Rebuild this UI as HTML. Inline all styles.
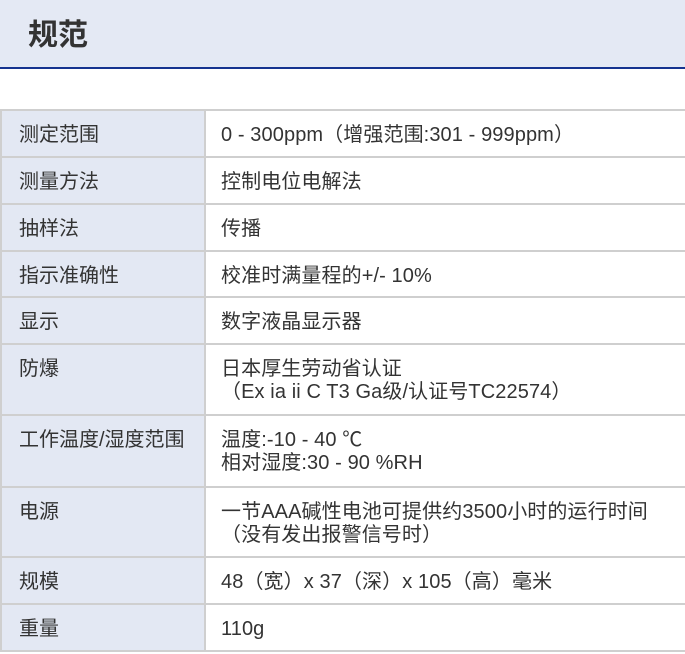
<!DOCTYPE html>
<html><head><meta charset="utf-8"><style>
html,body{margin:0;padding:0;background:#fff;width:685px;height:654px;overflow:hidden}
body{font-family:"Liberation Sans","Noto Sans CJK SC",sans-serif;color:#333}
.hd{position:absolute;left:0;top:0;width:685px;height:67px;background:#e4e9f4;border-bottom:2px solid #15338f}
.hd span{position:absolute;left:28px;top:16px;font-size:30px;font-weight:bold;color:#333;line-height:40px}
table{position:absolute;left:0;top:109px;width:687px;border-collapse:collapse;font-size:20px;line-height:23px}
td{border:2px solid #cfcfcf;vertical-align:top;padding:13px 0 0 0;box-sizing:border-box}
td.l{width:204px;background:#e3e8f3;padding-left:17px}
td.r{padding-left:15px;background:#fff;letter-spacing:0.1px}
</style></head><body>
<div class="hd"><span>规范</span></div>
<table>
<tr style="height:47px"><td class="l">测定范围</td><td class="r">0 - 300ppm（增强范围:301 - 999ppm）</td></tr>
<tr style="height:47px"><td class="l">测量方法</td><td class="r">控制电位电解法</td></tr>
<tr style="height:47px"><td class="l">抽样法</td><td class="r">传播</td></tr>
<tr style="height:46px"><td class="l">指示准确性</td><td class="r">校准时满量程的+/- 10%</td></tr>
<tr style="height:47px"><td class="l">显示</td><td class="r">数字液晶显示器</td></tr>
<tr style="height:71px"><td class="l">防爆</td><td class="r">日本厚生劳动省认证<br>（Ex ia ii C T3 Ga级/认证号TC22574）</td></tr>
<tr style="height:72px"><td class="l">工作温度/湿度范围</td><td class="r">温度:-10 - 40 ℃<br>相对湿度:30 - 90 %RH</td></tr>
<tr style="height:70px"><td class="l">电源</td><td class="r">一节AAA碱性电池可提供约3500小时的运行时间<br>（没有发出报警信号时）</td></tr>
<tr style="height:47px"><td class="l">规模</td><td class="r">48（宽）x 37（深）x 105（高）毫米</td></tr>
<tr style="height:47px"><td class="l">重量</td><td class="r">110g</td></tr>
</table>
</body></html>
